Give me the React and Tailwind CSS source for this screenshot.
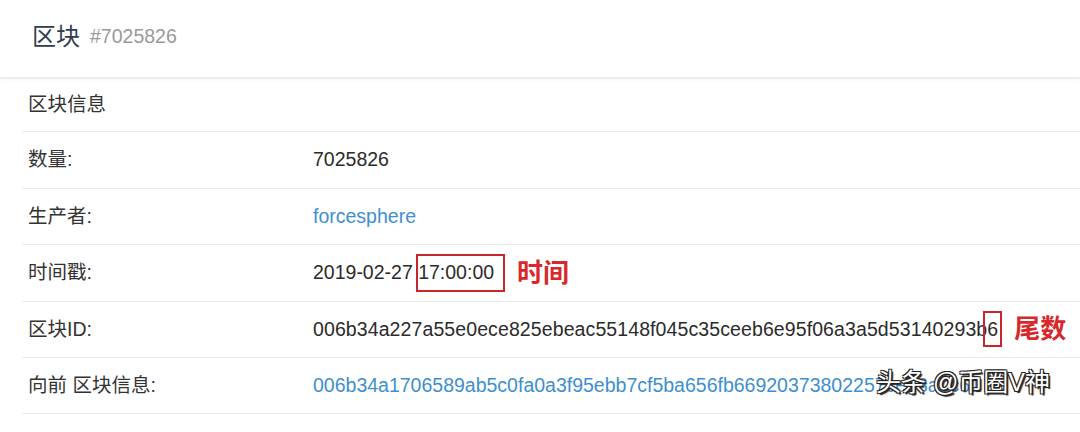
const font = { fontFamily: '"Liberation Sans", "Noto Sans CJK SC", sans-serif' }

function Row({ label, h, children }) {
  return (
    <div className={`flex items-center border-b border-[#ebebeb] pl-[6px] ${h}`}>
      <div className="w-[285px] shrink-0 text-[#333]">{label}</div>
      <div className="flex items-center whitespace-nowrap">{children}</div>
    </div>
  )
}

export default function App() {
  return (
    <div className="relative h-[432px] w-[1080px] overflow-hidden bg-white text-[19.5px] text-[#2b2b2b]" style={font}>
      {/* header */}
      <div className="flex h-[79px] items-center gap-[10px] border-b-2 border-[#ededed] pb-[4px] pl-[32px] shadow-[0_1px_3px_rgba(0,0,0,0.04)]">
        <span className="text-[24px] text-[#2f3d4f]">区块</span>
        <span className="text-[19.5px] text-[#9a9a9a]">#7025826</span>
      </div>

      <div className="ml-[22px]">
        <div className="flex h-[53px] items-center border-b border-[#ebebeb] pl-[6px] text-[#333]">区块信息</div>
        <Row label="数量:" h="h-[57px]">7025826</Row>
        <Row label="生产者:" h="h-[56px]">
          <span className="text-[#3d8fd1]">forcesphere</span>
        </Row>
        <Row label="时间戳:" h="h-[57px]">
          <span>2019-02-27&nbsp;</span>
          <span className="relative">
            17:00:00
            <span className="absolute -top-[4px] -bottom-[4px] -left-[2px] -right-[11px] border-2 border-[#c8262b]" />
          </span>
          <span className="ml-[23px] text-[26px] font-semibold text-[#d8282c]">时间</span>
        </Row>
        <Row label="区块ID:" h="h-[56px]">
          <span className="tracking-[0.1px]">006b34a227a55e0ece825ebeac55148f045c35ceeb6e95f06a3a5d53140293b</span>
          <span className="relative">
            6
            <span className="absolute -top-[4px] -bottom-[3px] -left-[4px] -right-[4px] border-2 border-[#c8262b]" />
          </span>
          <span className="ml-[16px] text-[26px] font-semibold text-[#d8282c]">尾数</span>
        </Row>
        <Row label="向前 区块信息:" h="h-[56px]">
          <span className="text-[#3d8fd1]">006b34a1706589ab5c0fa0a3f95ebb7cf5ba656fb66920373802257ce73a0c61</span>
        </Row>
      </div>

      {/* watermark */}
      <div
        className="absolute left-[876px] top-[364px] whitespace-nowrap text-[25px] text-white"
        style={{ textShadow: '1px 1px 0 #222, -1px -1px 0 #222, 1px -1px 0 #222, -1px 1px 0 #222, 2px 2px 1px #222' }}
      >
        头条 @币圈V神
      </div>
    </div>
  )
}
